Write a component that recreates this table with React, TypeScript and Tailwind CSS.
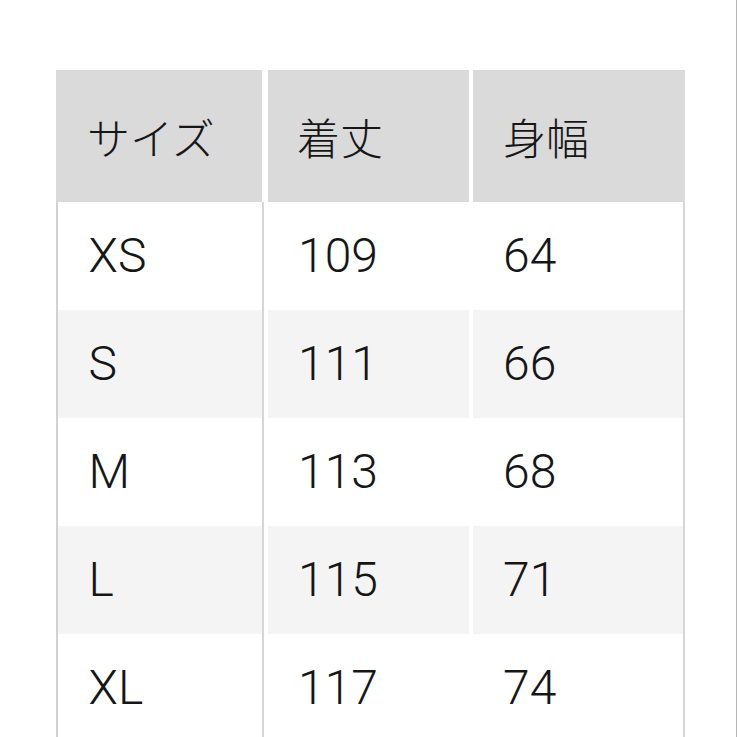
const header = ['サイズ', '着丈', '身幅'];

const rows: [string, string, string][] = [
  ['XS', '109', '64'],
  ['S', '111', '66'],
  ['M', '113', '68'],
  ['L', '115', '71'],
  ['XL', '117', '74'],
];

const jp = { fontFamily: '"Noto Sans CJK JP", "Noto Sans", sans-serif' };
const num = { fontFamily: 'Roboto, "Noto Sans CJK JP", sans-serif' };

export default function App() {
  return (
    <div className="h-[737px] w-[737px] overflow-hidden bg-white border-r border-[#b5b5b5] text-[#161616]">
      <div className="pl-[56px] pt-[70px]">
        <div className="w-[629px]">
          {/* header */}
          <div className="flex h-[132px] text-[43px] font-light leading-none" style={jp}>
            <div className="flex w-[206px] items-center bg-[#dadada] pl-[31px]">{header[0]}</div>
            <div className="w-[6px]" />
            <div className="flex w-[201px] items-center bg-[#dadada] pl-[29px]">{header[1]}</div>
            <div className="w-[4px]" />
            <div className="flex w-[212px] items-center bg-[#dadada] pl-[30px]">{header[2]}</div>
          </div>

          {/* body */}
          {rows.map((r, i) => {
            const bg = i % 2 === 1 ? 'bg-[#f4f4f4]' : 'bg-white';
            return (
              <div key={r[0]} className="flex h-[108px] text-[48px] font-light leading-none" style={num}>
                <div className="w-[1.5px] bg-[#d2d2d2]" />
                <div className={`flex w-[204.5px] items-center pl-[31px] ${bg}`}>{r[0]}</div>
                <div className="w-[2px] bg-[#d6d6d6]" />
                <div className="w-[4px]" />
                <div className={`flex w-[201px] items-center pl-[30px] ${bg}`}>{r[1]}</div>
                <div className="w-[4px]" />
                <div className={`flex w-[210px] items-center pl-[30px] ${bg}`}>{r[2]}</div>
                <div className="w-[2px] bg-[#d6d6d6]" />
              </div>
            );
          })}
        </div>
      </div>
    </div>
  );
}
